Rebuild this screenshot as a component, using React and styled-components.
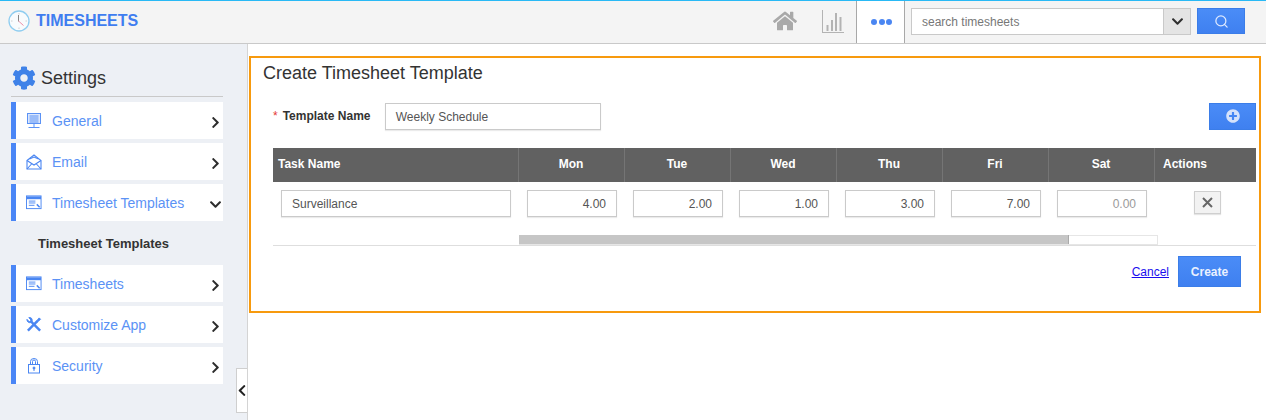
import React from "react";
import styled, { createGlobalStyle } from "styled-components";
import { FaCog, FaChevronRight, FaChevronDown, FaChevronLeft, FaHome, FaPlusCircle } from "react-icons/fa";
import { FiSearch } from "react-icons/fi";

const GlobalStyle = createGlobalStyle`
  html, body {
    margin: 0;
    padding: 0;
    height: 420px;
    overflow: hidden;
    background: #fff;
    font-family: "Liberation Sans", Arial, sans-serif;
    font-size: 13px;
    color: #333;
  }
  * { box-sizing: border-box; }
`;

const Page = styled.div`
  width: 1266px;
  height: 420px;
  display: flex;
  flex-direction: column;
`;

const Header = styled.header`
  height: 44px;
  flex: none;
  display: flex;
  align-items: stretch;
  background: #f4f4f4;
  border-top: 1px solid #29b9f5;
  border-bottom: 1px solid #c9c9c9;
`;

const Brand = styled.div`
  display: flex;
  align-items: center;
  gap: 6px;
  padding-left: 8px;
  flex: 1;
  padding-bottom: 2px;
  color: #3f7df0;
  font-size: 16px;
  font-weight: bold;
`;

const NavIcon = styled.div`
  width: 38px;
  display: flex;
  align-items: center;
  justify-content: center;
  color: #a9a9a9;
`;

const NavIcons = styled.div`
  display: flex;
  gap: 10px;
  margin-right: 4px;
  padding-bottom: 2px;
`;

const MoreTab = styled.div`
  width: 49px;
  background: #fff;
  border-left: 1px solid #a8a8a8;
  border-right: 1px solid #a8a8a8;
  display: flex;
  align-items: center;
  justify-content: center;
  gap: 1.5px;
  padding-left: 2px;
`;

const Dot = styled.span`
  width: 6px;
  height: 6px;
  border-radius: 50%;
  background: #4a86f2;
`;

const SearchArea = styled.div`
  display: flex;
  align-items: flex-start;
  padding: 7px 21px 0 6px;
`;

const SearchBox = styled.div`
  width: 280px;
  height: 27px;
  display: flex;
  background: #fff;
  border: 1px solid #c9c9c9;
`;

const SearchText = styled.div`
  flex: 1;
  padding-left: 10px;
  line-height: 26px;
  font-size: 12px;
  color: #777;
`;

const SearchCaret = styled.div`
  width: 27px;
  background: #e4e4e4;
  border-left: 1px solid #c9c9c9;
  display: flex;
  align-items: center;
  justify-content: center;
  color: #2f2f2f;
`;

const SearchButton = styled.button`
  width: 48px;
  height: 26px;
  margin-left: 6px;
  background: linear-gradient(#4a8cf7, #3f80f0);
  border: 1px solid #3b7de8;
  color: #dfeaff;
  padding: 0;
  display: flex;
  align-items: center;
  justify-content: center;
`;

const Body = styled.div`
  flex: 1;
  display: flex;
  min-height: 0;
`;

const Sidebar = styled.aside`
  position: relative;
  width: 248px;
  flex: none;
  background: #edf0f5;
  border-right: 1px solid #d4d4d4;
  padding: 21px 24px 0 11px;
`;

const SideTitle = styled.div`
  height: 32px;
  display: flex;
  align-items: center;
  gap: 5px;
  border-bottom: 1px solid #c9c9c9;
  padding: 0 0 5px 1px;
  font-size: 18px;
  color: #333;
  svg { color: #3f82e8; }
`;

const Menu = styled.div`
  margin-top: 5px;
  display: flex;
  flex-direction: column;
  gap: 4px;
`;

const MenuItem = styled.div`
  height: 37px;
  display: flex;
  align-items: center;
  background: #fff;
  border-left: 5px solid #4a86f6;
  padding-left: 10px;
  color: #5b92f5;
  font-size: 14px;
`;

const MenuIcon = styled.span`
  width: 16px;
  height: 16px;
  flex: none;
  display: flex;
  align-items: center;
  justify-content: center;
  margin-right: 10px;
`;

const MenuLabel = styled.span`
  flex: 1;
`;

const MenuArrow = styled.span`
  width: 14px;
  margin-right: 1px;
  padding-top: 4px;
  display: flex;
  justify-content: center;
  color: #2d2d2d;
`;

const SubItem = styled.div`
  height: 40px;
  padding-left: 27px;
  display: flex;
  align-items: center;
  font-weight: bold;
  font-size: 13px;
  color: #333;
  margin-top: -2px;
  margin-bottom: -2px;
`;

const CollapseTab = styled.div`
  position: absolute;
  right: 0;
  top: 324px;
  width: 11px;
  height: 45px;
  background: #fff;
  border: 1px solid #cfcfcf;
  border-right: none;
  display: flex;
  align-items: center;
  justify-content: flex-end;
  color: #222;
`;

const Main = styled.main`
  flex: 1;
  min-width: 0;
  padding: 12px 5px 0 1px;
`;

const Panel = styled.section`
  height: 257px;
  border: 2px solid #f79a0e;
  padding: 5px 3px 0 12px;
`;

const Title = styled.h1`
  margin: 0;
  font-size: 18px;
  line-height: 21px;
  font-weight: normal;
  color: #333;
`;

const FormRow = styled.div`
  margin-top: 18px;
  padding-left: 10px;
  display: flex;
  align-items: center;
  height: 28px;
`;

const Required = styled.span`
  color: #e53935;
  margin-right: 5px;
  font-size: 12px;
`;

const Label = styled.label`
  font-weight: bold;
  font-size: 12px;
  color: #333;
  width: 102px;
  padding-bottom: 1px;
`;

const TextField = styled.div`
  width: ${(p) => p.$w}px;
  height: 27px;
  line-height: 26px;
  padding: 0 10px;
  background: #fff;
  border: 1px solid #cacaca;
  box-shadow: 0 1px 1px rgba(0, 0, 0, 0.08);
  font-size: 12px;
  color: ${(p) => (p.$muted ? "#9a9a9a" : "#555")};
  text-align: ${(p) => (p.$right ? "right" : "left")};
`;

const AddButton = styled.button`
  margin-left: auto;
  width: 47px;
  height: 27px;
  padding: 0;
  background: linear-gradient(#4a8cf7, #3f80f0);
  border: 1px solid #3b7de8;
  color: #d5e2fb;
  display: flex;
  align-items: center;
  justify-content: center;
`;

const TableWrap = styled.div`
  margin-top: 18px;
  margin-left: 10px;
`;

const Row = styled.div`
  display: grid;
  grid-template-columns: 246px repeat(6, 106px) 1fr;
`;

const HeadCell = styled.div`
  height: 34px;
  background: #616161;
  border-right: 1px solid #757575;
  color: #fff;
  font-size: 12px;
  font-weight: bold;
  display: flex;
  align-items: center;
  justify-content: ${(p) => (p.$left ? "flex-start" : "center")};
  padding-left: ${(p) => (p.$left ? "5px" : "0")};
  padding-right: ${(p) => (p.$left ? "0" : "1px")};
  padding-bottom: 3px;
  &:last-child { border-right: none; padding-left: 8px; }
`;

const BodyCell = styled.div`
  padding: 8px 0 0 ${(p) => p.$pad}px;
  height: 52px;
`;

const ActionCell = styled.div`
  padding: 9px 0 0 39px;
`;

const RemoveButton = styled.button`
  width: 27px;
  height: 23px;
  padding: 0;
  background: #f2f2f2;
  border: 1px solid #cfcfcf;
  box-shadow: 0 1px 1px rgba(0, 0, 0, 0.1);
  color: #666;
  display: flex;
  align-items: center;
  justify-content: center;
`;

const ScrollTrack = styled.div`
  margin: 1px 0 0 246px;
  width: 639px;
  height: 10px;
  background: #fff;
  border: 1px solid #e6e6e6;
`;

const ScrollThumb = styled.div`
  width: 550px;
  height: 9px;
  margin: -1px 0 0 -1px;
  background: #c6c6c6;
  border-right: 1px solid #aaa;
`;

const Footer = styled.div`
  border-top: 1px solid #dedede;
  display: flex;
  justify-content: flex-end;
  align-items: center;
  gap: 9px;
  padding: 10px 15px 0 0;
`;

const CancelLink = styled.a`
  font-size: 12px;
  color: #1a0dee;
  text-decoration: underline;
`;

const CreateButton = styled.button`
  width: 63px;
  height: 31px;
  padding: 0;
  background: linear-gradient(#4a8cf7, #3f80f0);
  border: 1px solid #3b7de8;
  color: #eaf1ff;
  font-family: inherit;
  font-size: 12px;
  font-weight: bold;
`;

const ClockLogo = () => (
  <svg width="22" height="22" viewBox="0 0 22 22">
    <circle cx="11" cy="11" r="10" fill="#f8fbfd" stroke="#8fcdf0" strokeWidth="1.3" />
    <path d="M11 3v1.5M11 17.5V19M3 11h1.5M17.5 11H19" stroke="#c5c5c5" strokeWidth="0.8" />
    <path d="M10.5 5v6.5" stroke="#777" strokeWidth="0.9" />
    <path d="M10.5 11l5 4.5" stroke="#ee8fa8" strokeWidth="1" />
  </svg>
);

const BarsIcon = () => (
  <svg width="22" height="23" viewBox="0 0 22 23" fill="#b3b3b3">
    <path d="M0 0h1v22h21v1H0z" />
    <rect x="4.5" y="15" width="2" height="6" />
    <rect x="9" y="10" width="2" height="11" />
    <rect x="13" y="3" width="2" height="18" />
    <rect x="17.5" y="7" width="2" height="14" />
  </svg>
);

const CrossIcon = () => (
  <svg width="11" height="11" viewBox="0 0 11 11" stroke="#666" strokeWidth="2">
    <path d="M1 1l9 9M10 1 1 10" />
  </svg>
);

const MonitorIcon = () => (
  <svg width="16" height="16" viewBox="0 0 16 16" fill="none" stroke="#5b92f5">
    <rect x="1.5" y="0.5" width="13" height="10" fill="#dbe7fd" />
    <path d="M3.5 3h9M3.5 5h9M3.5 7h9M3.5 9h9" />
    <path d="M8 11v3M2.5 14.5h11" />
  </svg>
);

const MailIcon = () => (
  <svg width="16" height="16" viewBox="0 0 16 16" fill="none" stroke="#4a86f2" strokeWidth="1.1">
    <path d="M1 6.5 8 1l7 5.5v8.5H1z" />
    <path d="M1 6.5 8 11l7-4.5M1 15l5-5.5M15 15l-5-5.5M3.5 5 8 3l4.5 2" />
  </svg>
);

const WindowIcon = () => (
  <svg width="17" height="15" viewBox="0 0 17 15" fill="none" stroke="#4a86f2">
    <rect x="0.5" y="0.5" width="15.5" height="13.5" />
    <path d="M0.5 2.5h15.5" strokeWidth="3" />
    <path d="M3 6h7M3 8h7M3 10.5h6" />
    <path d="M11.5 9.5l3 3" strokeWidth="1.6" />
  </svg>
);

const ToolsIcon = () => (
  <svg width="17" height="17" viewBox="0 0 17 17" fill="none" stroke="#4a86f2">
    <path d="M2 15 12 5" strokeWidth="2.6" />
    <path d="M11 5 14 1.5l1.5 1.5L12 6" fill="#4a86f2" />
    <path d="M15 15 5.5 5.5" strokeWidth="2.6" />
    <path d="M1 3l2.5 2.5L5.5 4 3 1.2C5.5.5 7 2.5 6.5 5L5 6.5C3 7 .8 5.5 1 3z" fill="#4a86f2" />
  </svg>
);

const LockIcon = () => (
  <svg width="14" height="16" viewBox="0 0 14 16" fill="none" stroke="#4a86f2">
    <rect x="1.5" y="6.5" width="11" height="8.5" />
    <path d="M3.5 6.5V3.5a3.5 3 0 0 1 7 0v3M5.5 6.5V3.5a1.5 1.5 0 0 1 3 0v3" />
    <circle cx="7" cy="10" r="1" fill="#4a86f2" />
    <path d="M7 10v3" />
  </svg>
);

const menuTop = [
  { label: "General", icon: <MonitorIcon /> },
  { label: "Email", icon: <MailIcon /> },
];

const menuBottom = [
  { label: "Timesheets", icon: <WindowIcon /> },
  { label: "Customize App", icon: <ToolsIcon /> },
  { label: "Security", icon: <LockIcon /> },
];

const days = ["Mon", "Tue", "Wed", "Thu", "Fri", "Sat"];
const values = ["4.00", "2.00", "1.00", "3.00", "7.00", "0.00"];

const SideEntry = ({ item, open }) => (
  <MenuItem>
    <MenuIcon>{item.icon}</MenuIcon>
    <MenuLabel>{item.label}</MenuLabel>
    <MenuArrow>{open ? <FaChevronDown size={13} /> : <FaChevronRight size={13} />}</MenuArrow>
  </MenuItem>
);

const App = () => {
  return (
    <Page>
      <GlobalStyle />
      <Header>
        <Brand>
          <ClockLogo />
          TIMESHEETS
        </Brand>
        <NavIcons>
          <NavIcon>
            <FaHome size={24} />
          </NavIcon>
          <NavIcon>
            <BarsIcon />
          </NavIcon>
        </NavIcons>
        <MoreTab>
          <Dot />
          <Dot />
          <Dot />
        </MoreTab>
        <SearchArea>
          <SearchBox>
            <SearchText>search timesheets</SearchText>
            <SearchCaret>
              <FaChevronDown size={13} />
            </SearchCaret>
          </SearchBox>
          <SearchButton>
            <FiSearch size={15} />
          </SearchButton>
        </SearchArea>
      </Header>
      <Body>
        <Sidebar>
          <SideTitle>
            <FaCog size={24} />
            Settings
          </SideTitle>
          <Menu>
            {menuTop.map((item) => (
              <SideEntry key={item.label} item={item} />
            ))}
            <SideEntry item={{ label: "Timesheet Templates", icon: <WindowIcon /> }} open />
            <SubItem>Timesheet Templates</SubItem>
            {menuBottom.map((item) => (
              <SideEntry key={item.label} item={item} />
            ))}
          </Menu>
          <CollapseTab>
            <FaChevronLeft size={13} />
          </CollapseTab>
        </Sidebar>
        <Main>
          <Panel>
            <Title>Create Timesheet Template</Title>
            <FormRow>
              <Required>*</Required>
              <Label>Template Name</Label>
              <TextField $w={216}>Weekly Schedule</TextField>
              <AddButton>
                <FaPlusCircle size={14} />
              </AddButton>
            </FormRow>
            <TableWrap>
              <Row>
                <HeadCell $left>Task Name</HeadCell>
                {days.map((d) => (
                  <HeadCell key={d}>{d}</HeadCell>
                ))}
                <HeadCell $left>Actions</HeadCell>
              </Row>
              <Row>
                <BodyCell $pad={8}>
                  <TextField $w={230}>Surveillance</TextField>
                </BodyCell>
                {values.map((v, i) => (
                  <BodyCell key={days[i]} $pad={8}>
                    <TextField $w={90} $right $muted={v === "0.00"}>
                      {v}
                    </TextField>
                  </BodyCell>
                ))}
                <ActionCell>
                  <RemoveButton>
                    <CrossIcon />
                  </RemoveButton>
                </ActionCell>
              </Row>
              <ScrollTrack>
                <ScrollThumb />
              </ScrollTrack>
              <Footer>
                <CancelLink href="#">Cancel</CancelLink>
                <CreateButton>Create</CreateButton>
              </Footer>
            </TableWrap>
          </Panel>
        </Main>
      </Body>
    </Page>
  );
};

export default App;
